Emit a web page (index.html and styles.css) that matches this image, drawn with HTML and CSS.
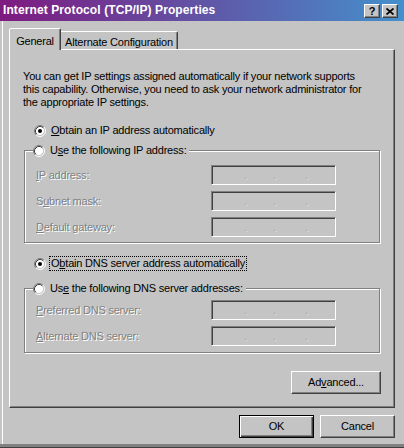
FILE: index.html
```html
<!DOCTYPE html>
<html>
<head>
<meta charset="utf-8">
<link rel="stylesheet" href="styles.css">
</head>
<body>
<div class="window">
  <div class="titlebar">
    <span class="title">Internet Protocol (TCP/IP) Properties</span>
    <div class="caption-btns">
      <span class="cbtn cbtn-help">?</span>
      <span class="cbtn"><svg width="8" height="7" viewBox="0 0 8 7"><path d="M0.5 0.5L7.5 6.5M7.5 0.5L0.5 6.5" stroke="#000" stroke-width="1.7" fill="none"/></svg></span>
    </div>
  </div>
  <div class="client">
    <div class="tabs">
      <div class="tab tab-active">General</div>
      <div class="tab tab-alt">Alternate Configuration</div>
    </div>
    <div class="panel">
      <p class="intro">You can get IP settings assigned automatically if your network supports<br>this capability. Otherwise, you need to ask your network administrator for<br>the appropriate IP settings.</p>

      <div class="radio r-first">
        <svg class="rb" width="12" height="12" viewBox="0 0 12 12"><circle cx="6" cy="6" r="4.5" fill="#fff"/><path d="M2.11 9.89A5.5 5.5 0 0 1 9.89 2.11" stroke="#808080" fill="none"/><path d="M9.89 2.11A5.5 5.5 0 0 1 2.11 9.89" stroke="#fff" fill="none"/><path d="M2.82 9.18A4.5 4.5 0 0 1 9.18 2.82" stroke="#404040" fill="none"/><path d="M9.18 2.82A4.5 4.5 0 0 1 2.82 9.18" stroke="#c4c4c4" fill="none"/><circle cx="6" cy="6" r="2" fill="#000"/></svg>
        <span><u>O</u>btain an IP address automatically</span>
      </div>

      <fieldset class="group g-ip">
        <legend>
          <span class="radio">
            <svg class="rb" width="12" height="12" viewBox="0 0 12 12"><circle cx="6" cy="6" r="4.5" fill="#fff"/><path d="M2.11 9.89A5.5 5.5 0 0 1 9.89 2.11" stroke="#808080" fill="none"/><path d="M9.89 2.11A5.5 5.5 0 0 1 2.11 9.89" stroke="#fff" fill="none"/><path d="M2.82 9.18A4.5 4.5 0 0 1 9.18 2.82" stroke="#404040" fill="none"/><path d="M9.18 2.82A4.5 4.5 0 0 1 2.82 9.18" stroke="#c4c4c4" fill="none"/></svg>
            <span>U<u>s</u>e the following IP address:</span>
          </span>
        </legend>
        <div class="rows">
          <span class="lbl"><u>I</u>P address:</span>
          <div class="ipfield"><span class="dot d1">.</span><span class="dot d2">.</span><span class="dot">.</span></div>
          <span class="lbl">S<u>u</u>bnet mask:</span>
          <div class="ipfield"><span class="dot d1">.</span><span class="dot d2">.</span><span class="dot">.</span></div>
          <span class="lbl"><u>D</u>efault gateway:</span>
          <div class="ipfield"><span class="dot d1">.</span><span class="dot d2">.</span><span class="dot">.</span></div>
        </div>
      </fieldset>

      <div class="radio r-dns">
        <svg class="rb" width="12" height="12" viewBox="0 0 12 12"><circle cx="6" cy="6" r="4.5" fill="#fff"/><path d="M2.11 9.89A5.5 5.5 0 0 1 9.89 2.11" stroke="#808080" fill="none"/><path d="M9.89 2.11A5.5 5.5 0 0 1 2.11 9.89" stroke="#fff" fill="none"/><path d="M2.82 9.18A4.5 4.5 0 0 1 9.18 2.82" stroke="#404040" fill="none"/><path d="M9.18 2.82A4.5 4.5 0 0 1 2.82 9.18" stroke="#c4c4c4" fill="none"/><circle cx="6" cy="6" r="2" fill="#000"/></svg>
        <span class="focus">O<u>b</u>tain DNS server address automatically</span>
      </div>

      <fieldset class="group g-dns">
        <legend>
          <span class="radio">
            <svg class="rb" width="12" height="12" viewBox="0 0 12 12"><circle cx="6" cy="6" r="4.5" fill="#fff"/><path d="M2.11 9.89A5.5 5.5 0 0 1 9.89 2.11" stroke="#808080" fill="none"/><path d="M9.89 2.11A5.5 5.5 0 0 1 2.11 9.89" stroke="#fff" fill="none"/><path d="M2.82 9.18A4.5 4.5 0 0 1 9.18 2.82" stroke="#404040" fill="none"/><path d="M9.18 2.82A4.5 4.5 0 0 1 2.82 9.18" stroke="#c4c4c4" fill="none"/></svg>
            <span>Us<u>e</u> the following DNS server addresses:</span>
          </span>
        </legend>
        <div class="rows">
          <span class="lbl"><u>P</u>referred DNS server:</span>
          <div class="ipfield"><span class="dot d1">.</span><span class="dot d2">.</span><span class="dot">.</span></div>
          <span class="lbl"><u>A</u>lternate DNS server:</span>
          <div class="ipfield"><span class="dot d1">.</span><span class="dot d2">.</span><span class="dot">.</span></div>
        </div>
      </fieldset>

      <div class="adv-row">
        <div class="btn btn-adv">Ad<u>v</u>anced...</div>
      </div>
    </div>
    <div class="footer">
      <div class="btn btn-default">OK</div>
      <div class="btn btn-std">Cancel</div>
    </div>
  </div>
</div>
</body>
</html>
```

FILE: styles.css
```css
* { box-sizing: border-box; }
html, body { margin: 0; padding: 0; }
body {
  width: 404px;
  height: 448px;
  overflow: hidden;
  background: #c4c4c4;
  font-family: "Liberation Sans", Arial, sans-serif;
  font-size: 11px;
  line-height: 13px;
  letter-spacing: -0.2px;
  color: #000;
}
.window { display: flex; flex-direction: column; height: 448px; }

.titlebar {
  height: 21px;
  flex: none;
  display: flex;
  align-items: center;
  padding: 0 6px 0 3px;
  background: linear-gradient(to right, #7e1a80, #4490cc);
  color: #fff;
}
.title { font-weight: bold; white-space: nowrap; font-size: 12px; letter-spacing: 0.1px; }
.caption-btns { margin-left: auto; display: flex; gap: 2px; margin-top: 1px; }
.cbtn {
  width: 16px;
  height: 14px;
  background: #c4c4c4;
  border: 1px solid;
  border-color: #fff #404040 #404040 #fff;
  box-shadow: inset -1px -1px #808080;
  display: flex;
  align-items: center;
  justify-content: center;
  color: #000;
  font-weight: bold;
  font-size: 11px;
  line-height: 11px;
  letter-spacing: 0;
}

.client {
  flex: 1;
  padding: 7px 9px 0;
  box-shadow: inset 0 -1px #404040, inset 0 -4px #808080, inset 2px 0 #c4c4c4, inset 3px 0 #fff;
}

.tabs { display: flex; align-items: flex-end; height: 21px; }
.tab { text-align: center; background: #c4c4c4; white-space: nowrap; }
.tab-active {
  width: 52px;
  height: 22px;
  margin-bottom: -1px;
  position: relative;
  z-index: 1;
  border: 1px solid;
  border-bottom: 0;
  border-color: #fff #404040 transparent #fff;
  box-shadow: inset -1px 0 #808080;
  border-radius: 2px 2px 0 0;
  padding-top: 6px;
}
.tab-alt {
  width: 117px;
  height: 18px;
  border-top: 1px solid #fff;
  border-right: 1px solid #404040;
  box-shadow: inset -1px 0 #808080;
  border-radius: 0 2px 0 0;
  padding-top: 4px;
}

.panel {
  height: 359px;
  border: 1px solid;
  border-color: #fff #404040 #404040 #fff;
  box-shadow: inset -1px -1px #808080;
  display: flex;
  flex-direction: column;
  align-items: flex-start;
}
.intro { margin: 20px 0 0 13px; white-space: nowrap; }

.radio { display: flex; align-items: center; gap: 5px; height: 13px; white-space: nowrap; }
.rb { flex: none; }
.r-first { margin: 15px 0 0 24px; }
.r-dns { margin: 14px 0 0 24px; }
.focus { outline: 1px dotted #000; outline-offset: 0; padding: 0 1px; margin-left: -1px; }

.group {
  margin: 0 0 0 14px;
  width: 356px;
  min-inline-size: 0;
  padding: 0 0 0 8px;
  border: 1px solid #808080;
  box-shadow: inset 1px 1px #fff, 1px 1px #fff;
}
.group legend { padding: 0 3px 0 0; background: #c4c4c4; }
.g-ip { margin-top: 7px; padding-top: 8px; padding-bottom: 5px; }
.g-dns { margin-top: 12px; padding-top: 5px; padding-bottom: 6px; }

.rows {
  display: grid;
  grid-template-columns: 175px 125px;
  row-gap: 6px;
  padding-left: 3px;
  align-items: center;
}
.lbl { color: #808080; text-shadow: 1px 1px 0 #fff; white-space: nowrap; }
.ipfield {
  height: 20px;
  border: 1px solid;
  border-color: #808080 #fff #fff #808080;
  box-shadow: inset 1px 1px #404040;
  display: flex;
  align-items: center;
  padding-left: 32px;
}
.dot { color: #a4a4a4; text-shadow: 1px 1px 0 #e0e0e0; }
.d1 { width: 29px; }
.d2 { width: 32px; }

.adv-row {
  align-self: stretch;
  display: flex;
  justify-content: flex-end;
  margin-top: 18px;
  padding-right: 13px;
}
.btn {
  height: 23px;
  display: flex;
  align-items: center;
  justify-content: center;
  background: #c4c4c4;
  border: 1px solid;
  border-color: #fff #404040 #404040 #fff;
  box-shadow: inset -1px -1px #808080;
  white-space: nowrap;
}
.btn-adv { width: 90px; }
.footer { display: flex; justify-content: flex-end; gap: 6px; margin-top: 7px; }
.btn-default, .btn-std { width: 75px; }
.btn-default {
  border-color: #000;
  box-shadow: inset 1px 1px #fff, inset -1px -1px #404040, inset -2px -2px #808080;
}
```
